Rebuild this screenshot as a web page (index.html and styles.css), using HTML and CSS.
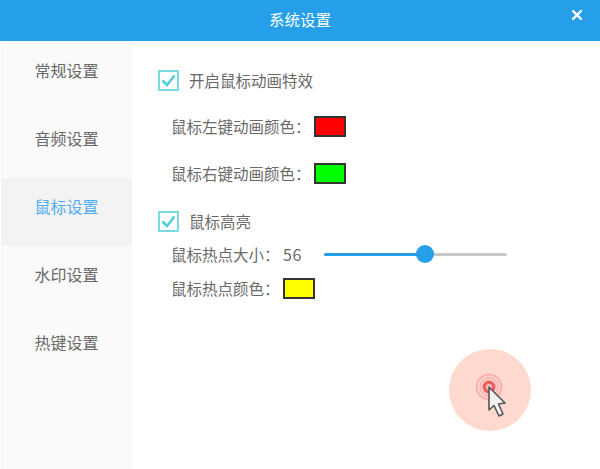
FILE: index.html
```html
<!DOCTYPE html>
<html lang="zh">
<head>
<meta charset="utf-8">
<title>系统设置</title>
<link rel="stylesheet" href="styles.css">
</head>
<body>
<div class="window">
  <header class="titlebar">
    <span class="title">系统设置</span>
    <svg class="close" width="12" height="12" viewBox="0 0 12 12"><path d="M2 2 L10 10 M10 2 L2 10" stroke="#fff" stroke-width="2.4" stroke-linecap="round"/></svg>
  </header>
  <div class="body">
    <nav class="sidebar">
      <div class="nav-item">常规设置</div>
      <div class="nav-item">音频设置</div>
      <div class="nav-item active">鼠标设置</div>
      <div class="nav-item">水印设置</div>
      <div class="nav-item">热键设置</div>
    </nav>
    <main class="content">
      <label class="check-row first">
        <span class="checkbox"><svg width="17" height="17" viewBox="0 0 17 17"><path d="M2.5 8.5 L7 13 L14.5 3.5" fill="none" stroke="#4fcfdc" stroke-width="2.6"/></svg></span>
        <span>开启鼠标动画特效</span>
      </label>
      <div class="color-row left"><span>鼠标左键动画颜色：</span><span class="swatch red"></span></div>
      <div class="color-row right"><span>鼠标右键动画颜色：</span><span class="swatch green"></span></div>
      <label class="check-row second">
        <span class="checkbox"><svg width="17" height="17" viewBox="0 0 17 17"><path d="M2.5 8.5 L7 13 L14.5 3.5" fill="none" stroke="#4fcfdc" stroke-width="2.6"/></svg></span>
        <span>鼠标高亮</span>
      </label>
      <div class="slider-row">
        <span class="slider-label">鼠标热点大小：</span><span class="slider-value">56</span>
        <div class="slider"><div class="slider-fill"></div><div class="slider-knob"></div></div>
      </div>
      <div class="color-row hot"><span>鼠标热点颜色：</span><span class="swatch yellow"></span></div>
      <div class="preview">
        <div class="halo">
          <svg class="cursor-art" width="50" height="60" viewBox="0 0 50 60">
            <circle cx="20" cy="20" r="12.5" fill="#fdd0ca" stroke="#f9a9a5" stroke-width="1.5"/>
            <circle cx="20" cy="20" r="9" fill="#fbd0cc" stroke="#f8a8a4" stroke-width="1"/>
            <circle cx="20" cy="20" r="6.5" fill="#ee5f5f"/>
            <circle cx="20" cy="20" r="3" fill="#f9c2bd"/>
            <path d="M20 20 L20 43 L25 38.5 L30 49 L34 47 L29.5 37 L36 36 Z" fill="#f2f2f2" stroke="#555" stroke-width="1.6" stroke-linejoin="round"/>
          </svg>
        </div>
      </div>
    </main>
  </div>
</div>
</body>
</html>
```
FILE: styles.css
```css
* { box-sizing: border-box; }
html, body { margin: 0; padding: 0; }
body {
  width: 600px;
  height: 469px;
  overflow: hidden;
  background: #fff;
  font-family: "Noto Sans CJK SC", "Noto Sans", sans-serif;
  color: #696969;
}
.window { width: 600px; height: 469px; display: flex; flex-direction: column; }
.titlebar {
  height: 41px;
  flex: none;
  background: #259fe9;
  display: flex;
  align-items: center;
  justify-content: center;
  padding-bottom: 3px;
  position: relative;
}
.title { color: #fff; font-size: 15.5px; }
.close { position: absolute; right: 17px; top: 9px; }
.body { flex: 1; display: flex; min-height: 0; }
.sidebar { width: 132px; flex: none; background: #fafafa; padding-top: 1px; border-left: 1px solid #fff; }
.nav-item {
  height: 68px;
  display: flex;
  align-items: center;
  justify-content: center;
  padding-bottom: 12px;
  font-size: 16px;
  color: #696969;
}
.nav-item.active { background: #f3f3f3; color: #4fadee; }
.content { flex: 1; position: relative; padding: 27px 0 0 26px; font-size: 15.5px; }
.check-row { display: flex; align-items: center; gap: 10px; height: 24px; }
.checkbox {
  width: 21px;
  height: 21px;
  border: 2px solid #7adbe4;
  background: #fff;
  display: flex;
  align-items: center;
  justify-content: center;
}
.color-row { display: flex; align-items: center; gap: 3.5px; height: 24px; margin-left: 13px; }
.color-row.left { margin-top: 22px; }
.color-row.right { margin-top: 23px; }
.check-row.second { margin-top: 24px; }
.color-row.hot { margin-top: 10px; }
.swatch { width: 32px; height: 21px; border: 2px solid #333; }
.red { background: #ff0000; }
.green { background: #00ff00; }
.yellow { background: #ffff00; }
.slider-row { display: flex; align-items: center; height: 24px; margin-left: 13px; margin-top: 9px; }
.slider-value { margin-left: 3.5px; width: 41px; font-size: 16px; letter-spacing: 0.5px; }
.slider { width: 183px; height: 3px; background: #c9c9c9; border-radius: 2px; position: relative; }
.slider-fill { width: 101px; height: 3px; background: #259fe9; border-radius: 2px; }
.slider-knob {
  position: absolute;
  left: 92px;
  top: -8px;
  width: 18px;
  height: 18px;
  border-radius: 50%;
  background: #259fe9;
}
.preview { position: absolute; left: 317px; top: 308px; }
.halo { width: 82px; height: 82px; border-radius: 50%; background: #fdd9d0; position: relative; }
.cursor-art { position: absolute; left: 20px; top: 18px; }
```
